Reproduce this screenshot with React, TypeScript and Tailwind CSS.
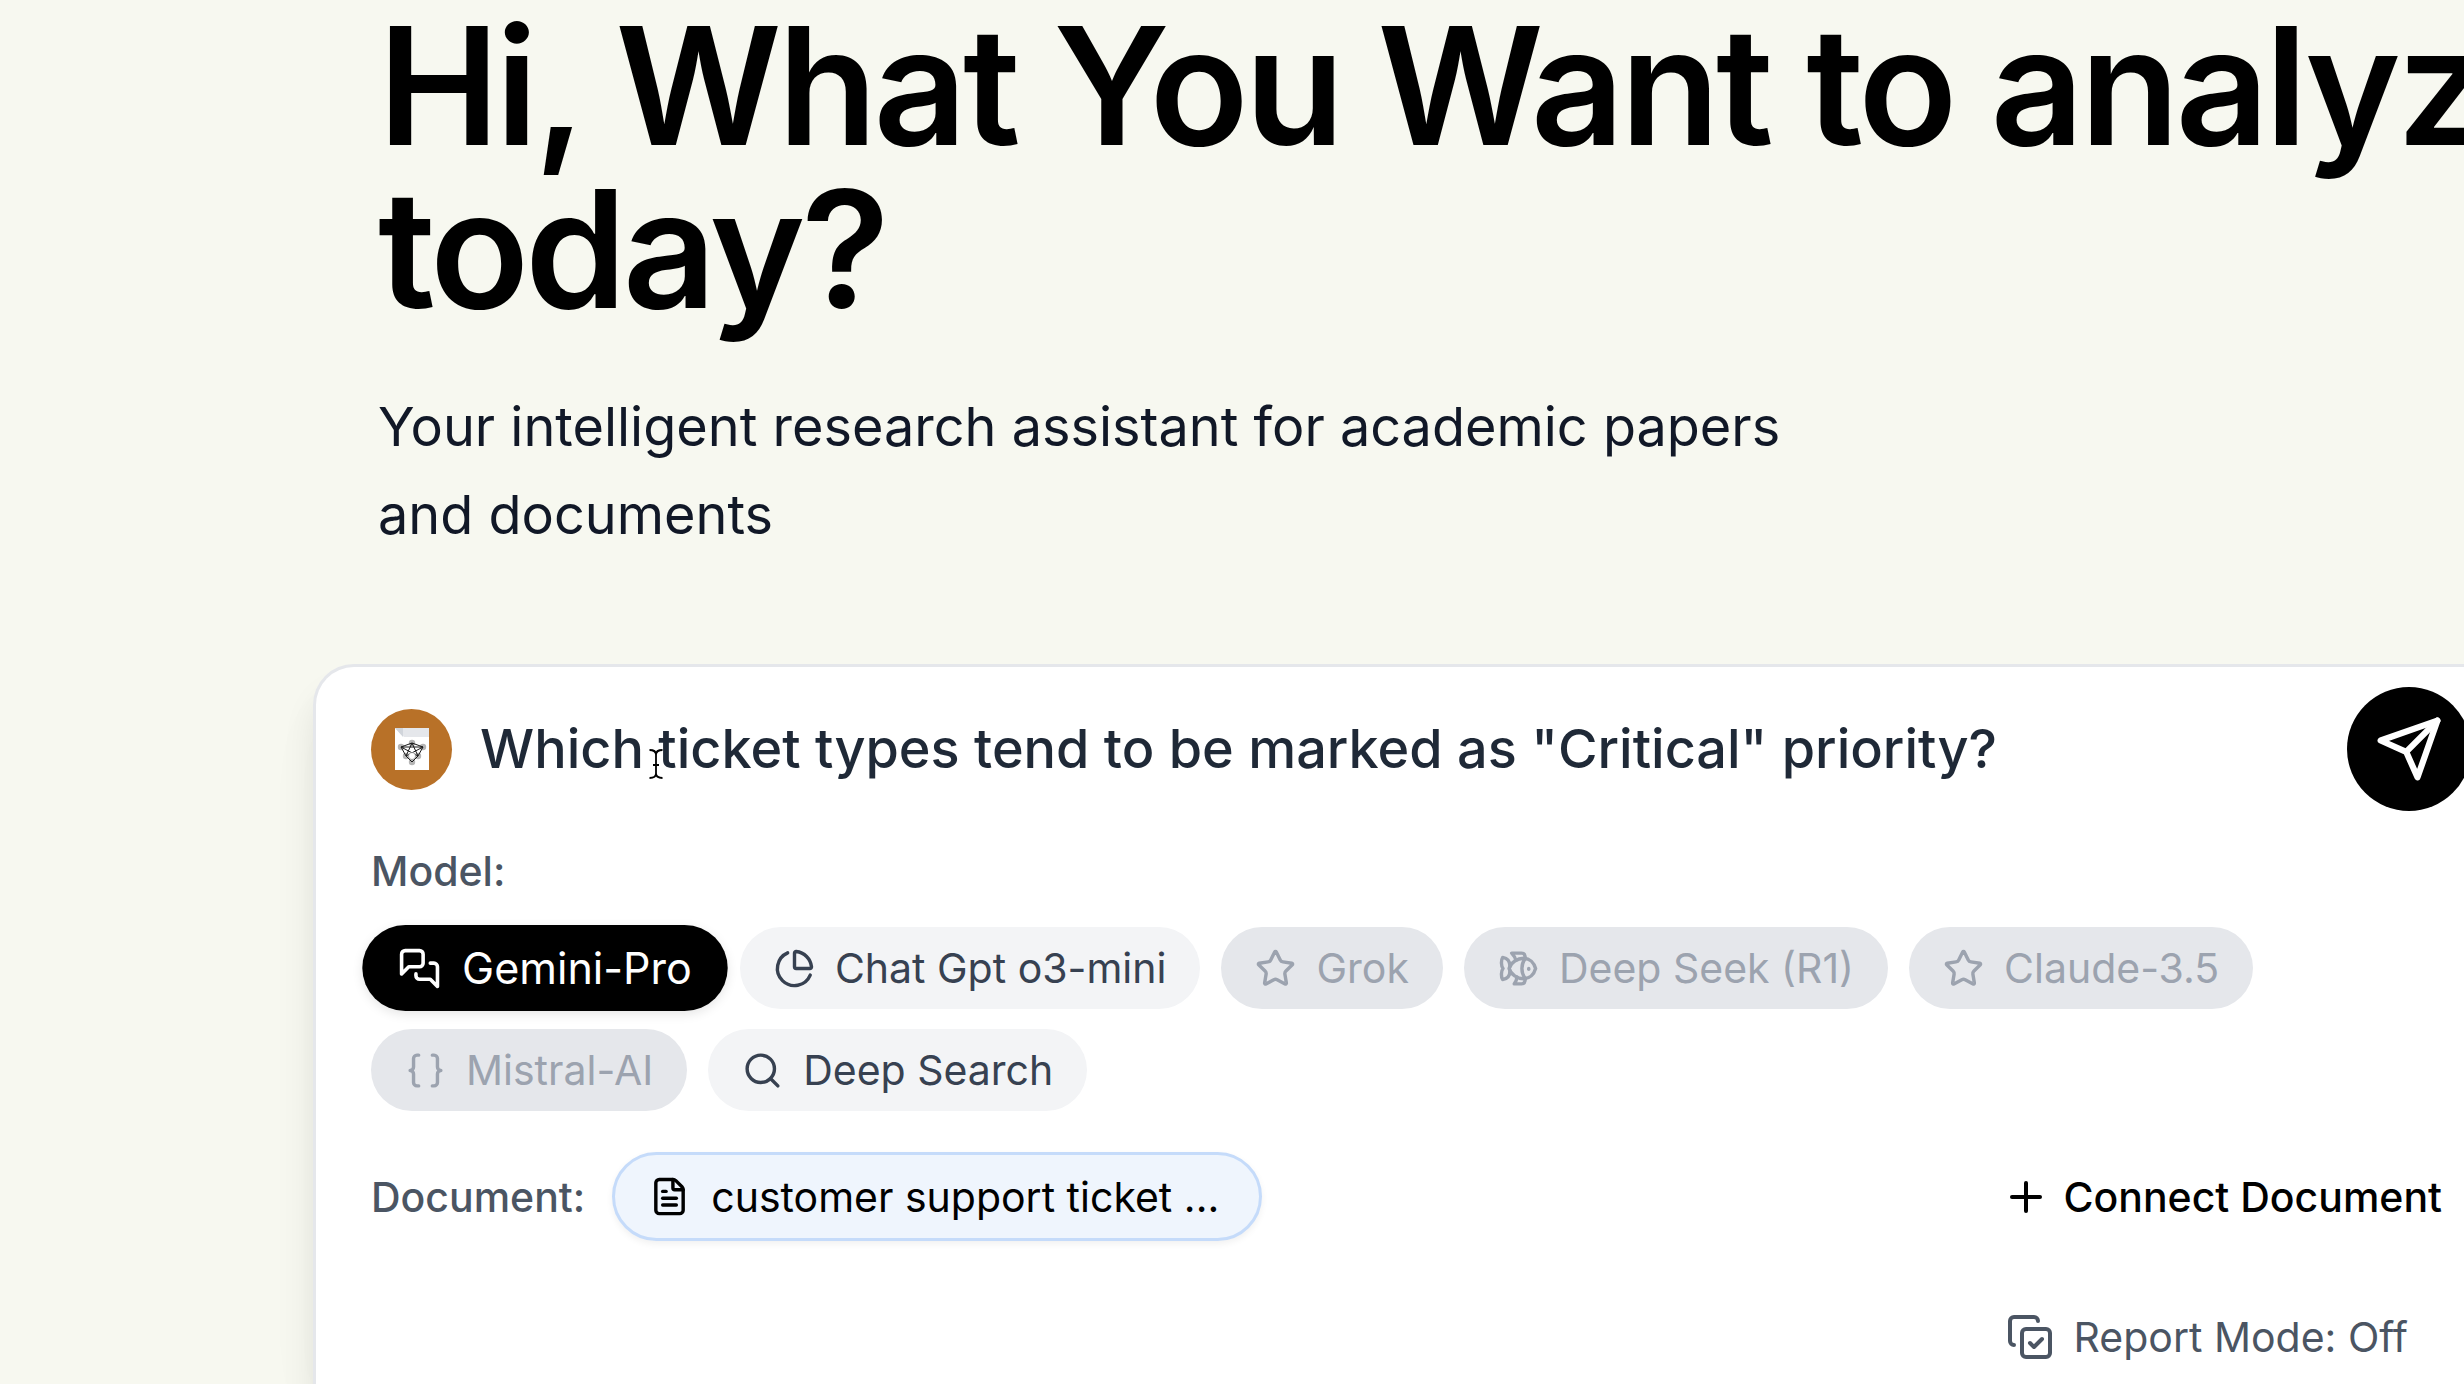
import { useState } from 'react';
import { Braces, ChartPie, CopyCheck, FileText, Fish, Plus, Search, Star } from 'lucide-react';
import clsx from 'clsx';

function ChatsIcon({ className }: { className?: string }) {
    return (
        <svg viewBox="0 0 24 24" fill="none" stroke="currentColor" strokeWidth="2" strokeLinecap="round" strokeLinejoin="round" className={className} aria-hidden="true">
            <path d="M14 9a2 2 0 0 1-2 2H6l-4 4V4c0-1.1.9-2 2-2h8a2 2 0 0 1 2 2v5Z" />
            <path d="M18 9h2a2 2 0 0 1 2 2v11l-4-4h-6a2 2 0 0 1-2-2v-1" />
        </svg>
    );
}

const MODELS = [
    { id: 'gemini', label: 'Gemini-Pro', icon: ChatsIcon },
    { id: 'gpt', label: 'Chat Gpt o3-mini', icon: ChartPie },
    { id: 'grok', label: 'Grok', icon: Star, disabled: true },
    { id: 'deepseek', label: 'Deep Seek (R1)', icon: Fish, disabled: true },
    { id: 'claude', label: 'Claude-3.5', icon: Star, disabled: true },
    { id: 'mistral', label: 'Mistral-AI', icon: Braces, disabled: true },
    { id: 'search', label: 'Deep Search', icon: Search },
];

// paper sheet with a folded corner and a small graph of nodes
function PaperLogo() {
    return (
        <svg viewBox="0 0 34 42" className="h-[42px] w-[34px]" aria-hidden="true">
            <path d="M0 0h34v42H0z" fill="#fff" />
            <path d="M0 0h34v9H9z" fill="#e5e7eb" />
            <path d="M0 0h8v9z" fill="#d1d5db" />
            <g fill="#b5b5b5">
                <circle cx="17" cy="15" r="3.2" />
                <circle cx="6" cy="19" r="3.2" />
                <circle cx="28" cy="19" r="3.2" />
                <circle cx="11" cy="28" r="3.2" />
                <circle cx="23" cy="28" r="3.2" />
                <circle cx="17" cy="34" r="3.2" />
            </g>
            <path d="M17 15 6 19l5 9 6 6 6-6 5-9zM6 19h22L11 28l6-13 6 13z" fill="none" stroke="#1a1a1a" strokeWidth="1" strokeLinejoin="round" />
            <circle cx="17" cy="28" r="3.5" fill="#fff" stroke="#777" strokeWidth="0.6" />
        </svg>
    );
}

function SendIcon() {
    return (
        <svg viewBox="0 0 24 24" fill="none" stroke="currentColor" strokeWidth="2.2" strokeLinecap="round" strokeLinejoin="round" className="size-[68px]" aria-hidden="true">
            <path d="m22 2-7 20-4-9-9-4Z" />
            <path d="M22 2 11 13" />
        </svg>
    );
}

function TextCursor() {
    return (
        <svg viewBox="0 0 14 30" fill="none" stroke="#000" strokeWidth="1.8" className="pointer-events-none absolute top-[41px] left-[169px] h-[30px] w-[14px]" aria-hidden="true">
            <path d="M.5 1C4 1 7 2.500 7 5.500v19C7 27.500 4 29 .5 29M13.500 1C10 1 7 2.500 7 5.500M13.500 29C10 29 7 27.500 7 24.500M4 16h6" />
        </svg>
    );
}

export default function App() {
    const [model, setModel] = useState('gemini');
    const [query, setQuery] = useState('Which ticket types tend to be marked as "Critical" priority?');
    const [report, setReport] = useState(false);

    return (
        <div className="h-screen overflow-hidden bg-[#f7f8f0] font-['Inter',sans-serif]">
            <main className="-mr-[65px] flex h-full flex-col pl-[313px]">
                <header className="px-[65px] pt-1">
                    <h1 className="whitespace-nowrap text-[163px] leading-[163px] font-semibold tracking-tight text-black">
                        Hi, What You Want to analyze
                        <br />
                        today?
                    </h1>
                    <p className="mt-[53px] max-w-[1440px] text-[54px] leading-[88px] text-[#111827]">
                        Your intelligent research assistant for academic papers and documents
                    </p>
                </header>

                <section className="mt-[105px] flex-1 rounded-t-[41px] border-[3px] border-b-0 border-[#e5e7eb] bg-white px-[55px] pt-5 shadow-[0_27px_34px_-3px_rgba(0,0,0,0.1),0_34px_80px_rgba(0,0,0,0.02)]">
                    <div className="flex items-center">
                        <div className="flex size-[81px] shrink-0 items-center justify-center rounded-full bg-[#b87128]">
                            <PaperLogo />
                        </div>
                        <div className="relative ml-7 flex-1">
                            <input
                                type="text"
                                aria-label="Question"
                                value={query}
                                onChange={(e) => setQuery(e.target.value)}
                                className="w-full bg-transparent text-[54px] leading-[82px] font-medium text-[#1f2937] outline-none"
                            />
                            <TextCursor />
                        </div>
                        <button type="button" aria-label="Send" className="flex size-[124px] shrink-0 items-center justify-center rounded-full bg-black text-white">
                            <SendIcon />
                        </button>
                    </div>

                    <div className="mt-[33px] text-[41px] leading-[54px] font-medium text-[#4b5563]">Model:</div>
                    <div className="mt-[29px] flex max-w-[2000px] flex-wrap gap-x-[21px] gap-y-5">
                        {MODELS.map((item) => {
                            const Icon = item.icon;
                            const isActive = item.id === model;
                            return (
                                <button
                                    key={item.id}
                                    type="button"
                                    disabled={item.disabled}
                                    onClick={() => setModel(item.id)}
                                    className={clsx(
                                        'flex h-[82px] items-center gap-5 rounded-full px-[34px] text-[41px] leading-[54px]',
                                        isActive && 'scale-105 bg-black text-white shadow-[0_3px_10px_rgba(0,0,0,0.1)]',
                                        item.disabled && 'bg-[#e5e7eb] text-[#9ca3af]',
                                        !isActive && !item.disabled && 'bg-[#f3f4f6] text-[#374151]'
                                    )}
                                >
                                    <Icon className="size-[41px]" />
                                    {item.label}
                                </button>
                            );
                        })}
                    </div>

                    <div className="mt-[41px] flex items-center justify-between pr-[29px]">
                        <div className="flex items-center gap-[27px]">
                            <span className="text-[41px] leading-[54px] font-medium text-[#4b5563]">Document:</span>
                            <button type="button" className="flex h-[89px] items-center gap-[21px] rounded-full border-[3px] border-[#c5dbfa] bg-[#eff5fd] pr-10 pl-[34px] text-[41px] leading-[54px] text-black shadow-[0_3px_7px_rgba(0,0,0,0.06)]">
                                <FileText className="size-[41px]" />
                                customer support ticket ...
                            </button>
                        </div>
                        <button type="button" className="flex items-center gap-[13px] text-[41px] leading-[54px] font-medium text-black">
                            <Plus className="size-[48px]" />
                            Connect Document
                        </button>
                    </div>

                    <div className="mt-[69px] flex justify-end pr-[63px]">
                        <button type="button" onClick={() => setReport(!report)} className="flex items-center gap-5 text-[41px] leading-[54px] text-[#4b5563]">
                            <CopyCheck className="size-[48px]" />
                            Report Mode: {report ? 'On' : 'Off'}
                        </button>
                    </div>
                </section>
            </main>
        </div>
    );
}
